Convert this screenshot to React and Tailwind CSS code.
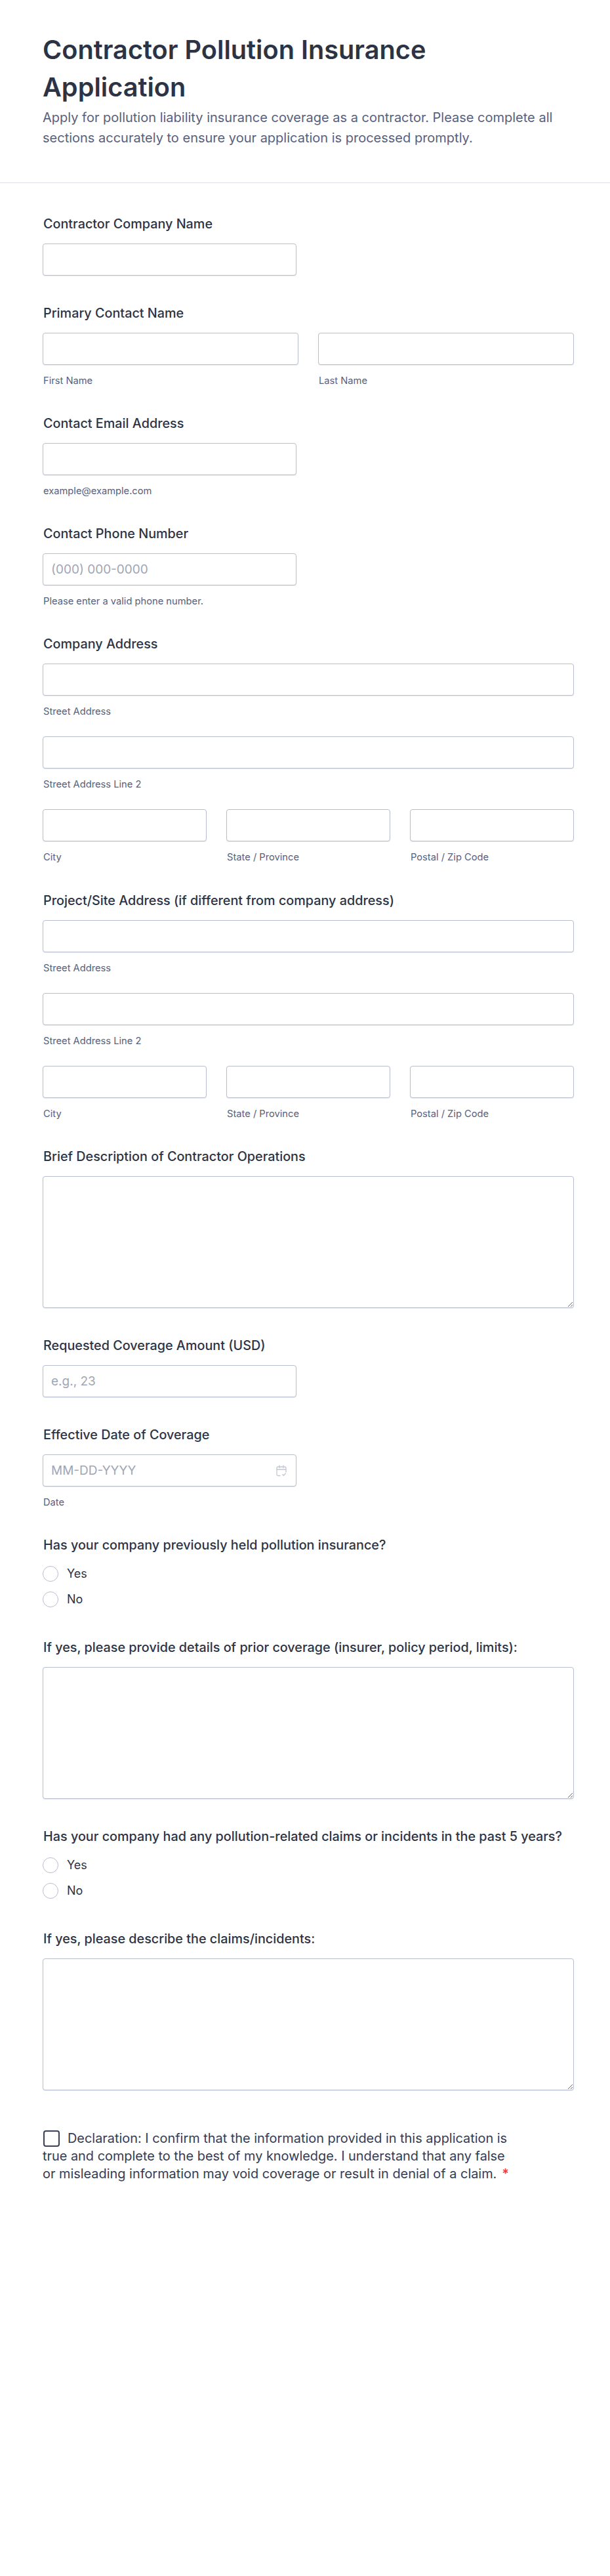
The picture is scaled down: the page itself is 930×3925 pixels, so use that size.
import React from 'react';

const Label = ({ children, className = 'mb-[16px]' }) => (
  <label className={`block text-[19.8px] leading-[27px] font-medium text-[#2c3345] ml-[1px] ${className}`}>{children}</label>
);

const Input = ({ placeholder, className = '' }) => (
  <input
    placeholder={placeholder}
    className={`block h-[49px] px-[12px] bg-white border border-[#b8bdd0] rounded-[4px] shadow-[0_1px_1px_rgba(100,110,140,0.15)] text-[19px] placeholder:text-[#a0a6b6] ${className}`}
  />
);

const Sub = ({ children }) => (
  <div className="mt-[14px] ml-[1px] text-[14.7px] leading-[20px] text-[#57607d]">{children}</div>
);

const Field = ({ sub }) => (
  <div>
    <Input className="w-full" />
    {sub && <Sub>{sub}</Sub>}
  </div>
);

const AddressBlock = () => (
  <div className="flex flex-col gap-[28px]">
    <Field sub="Street Address" />
    <Field sub="Street Address Line 2" />
    <div className="grid grid-cols-3 gap-[30px]">
      <Field sub="City" />
      <Field sub="State / Province" />
      <Field sub="Postal / Zip Code" />
    </div>
  </div>
);

const TextArea = () => (
  <textarea className="block w-full h-[201px] bg-white border border-[#b8bdd0] rounded-[4px] shadow-[0_1px_1px_rgba(100,110,140,0.15)]" />
);

const Radio = ({ label }) => (
  <div className="flex items-center h-[39px]">
    <span className="w-[24px] h-[24px] rounded-full border border-[#b8bdd0] bg-white mr-[13px]"></span>
    <span className="text-[18px] text-[#2c3345]">{label}</span>
  </div>
);

const App = () => {
  return (
    <div className='w-[930px] min-h-[3925px] bg-white font-["Inter",sans-serif]'>
      <header className="px-[65px] pt-[48px] pb-[52px] border-b border-[#dfe1e8]">
        <h1 className="text-[39.7px] leading-[57px] font-semibold text-[#2c3345]">Contractor Pollution Insurance Application</h1>
        <p className="mt-[2px] text-[20px] leading-[31px] text-[#57607d]">Apply for pollution liability insurance coverage as a contractor. Please complete all sections accurately to ensure your application is processed promptly.</p>
      </header>
      <main className="pl-[65px] pr-[55px] pt-[49px] flex flex-col gap-[42px]">
        <div className="pb-[2px]">
          <Label>Contractor Company Name</Label>
          <Input className="w-[387px]" />
        </div>
        <div>
          <Label>Primary Contact Name</Label>
          <div className="grid grid-cols-2 gap-[30px]">
            <Field sub="First Name" />
            <Field sub="Last Name" />
          </div>
        </div>
        <div>
          <Label>Contact Email Address</Label>
          <Input className="w-[387px]" />
          <Sub>example@example.com</Sub>
        </div>
        <div>
          <Label>Contact Phone Number</Label>
          <Input className="w-[387px]" placeholder="(000) 000-0000" />
          <Sub>Please enter a valid phone number.</Sub>
        </div>
        <div>
          <Label>Company Address</Label>
          <AddressBlock />
        </div>
        <div className="mt-[1px]">
          <Label>Project/Site Address (if different from company address)</Label>
          <AddressBlock />
        </div>
        <div className="pb-[2px]">
          <Label>Brief Description of Contractor Operations</Label>
          <TextArea />
        </div>
        <div className="pb-[2px]">
          <Label>Requested Coverage Amount (USD)</Label>
          <Input className="w-[387px]" placeholder="e.g., 23" />
        </div>
        <div>
          <Label>Effective Date of Coverage</Label>
          <div className="relative w-[387px]">
            <Input className="w-full" placeholder="MM-DD-YYYY" />
            <svg className="absolute right-[15px] top-[16px] w-[16px] h-[18px] text-[#c3c7d4]" viewBox="0 0 16 18" fill="none" stroke="currentColor" strokeWidth="1.3" strokeLinecap="round" strokeLinejoin="round">
              <path d="M6 16.5H3a2 2 0 0 1-2-2V5a2 2 0 0 1 2-2h10a2 2 0 0 1 2 2v6" />
              <path d="M1 7h14" />
              <path d="M5 1v3.5M11 1v3.5" />
              <path d="M9.5 14.5l1.8 1.8 3.2-3.3" />
            </svg>
          </div>
          <Sub>Date</Sub>
        </div>
        <div className="-mb-[1px]">
          <Label className="mb-[10px]">Has your company previously held pollution insurance?</Label>
          <Radio label="Yes" />
          <Radio label="No" />
        </div>
        <div className="pb-[2px]">
          <Label>If yes, please provide details of prior coverage (insurer, policy period, limits):</Label>
          <TextArea />
        </div>
        <div className="-mb-[1px]">
          <Label className="mb-[10px]">Has your company had any pollution-related claims or incidents in the past 5 years?</Label>
          <Radio label="Yes" />
          <Radio label="No" />
        </div>
        <div className="pb-[2px]">
          <Label>If yes, please describe the claims/incidents:</Label>
          <TextArea />
        </div>
        <div className="w-[725px] mt-[16px] text-[19.9px] leading-[27px] text-[#343c54]">
          <span className="inline-block align-[-6px] w-[25px] h-[25px] border-2 border-[#3a4058] rounded-[4px] mr-[12px] ml-[1px]"></span>
          Declaration: I confirm that the information provided in this application is true and complete to the best of my knowledge. I understand that any false or misleading information may void coverage or result in denial of a claim.
          <span className="text-[#f23a3c] font-semibold ml-[8px]">*</span>
        </div>
      </main>
    </div>
  );
};

export default App;
